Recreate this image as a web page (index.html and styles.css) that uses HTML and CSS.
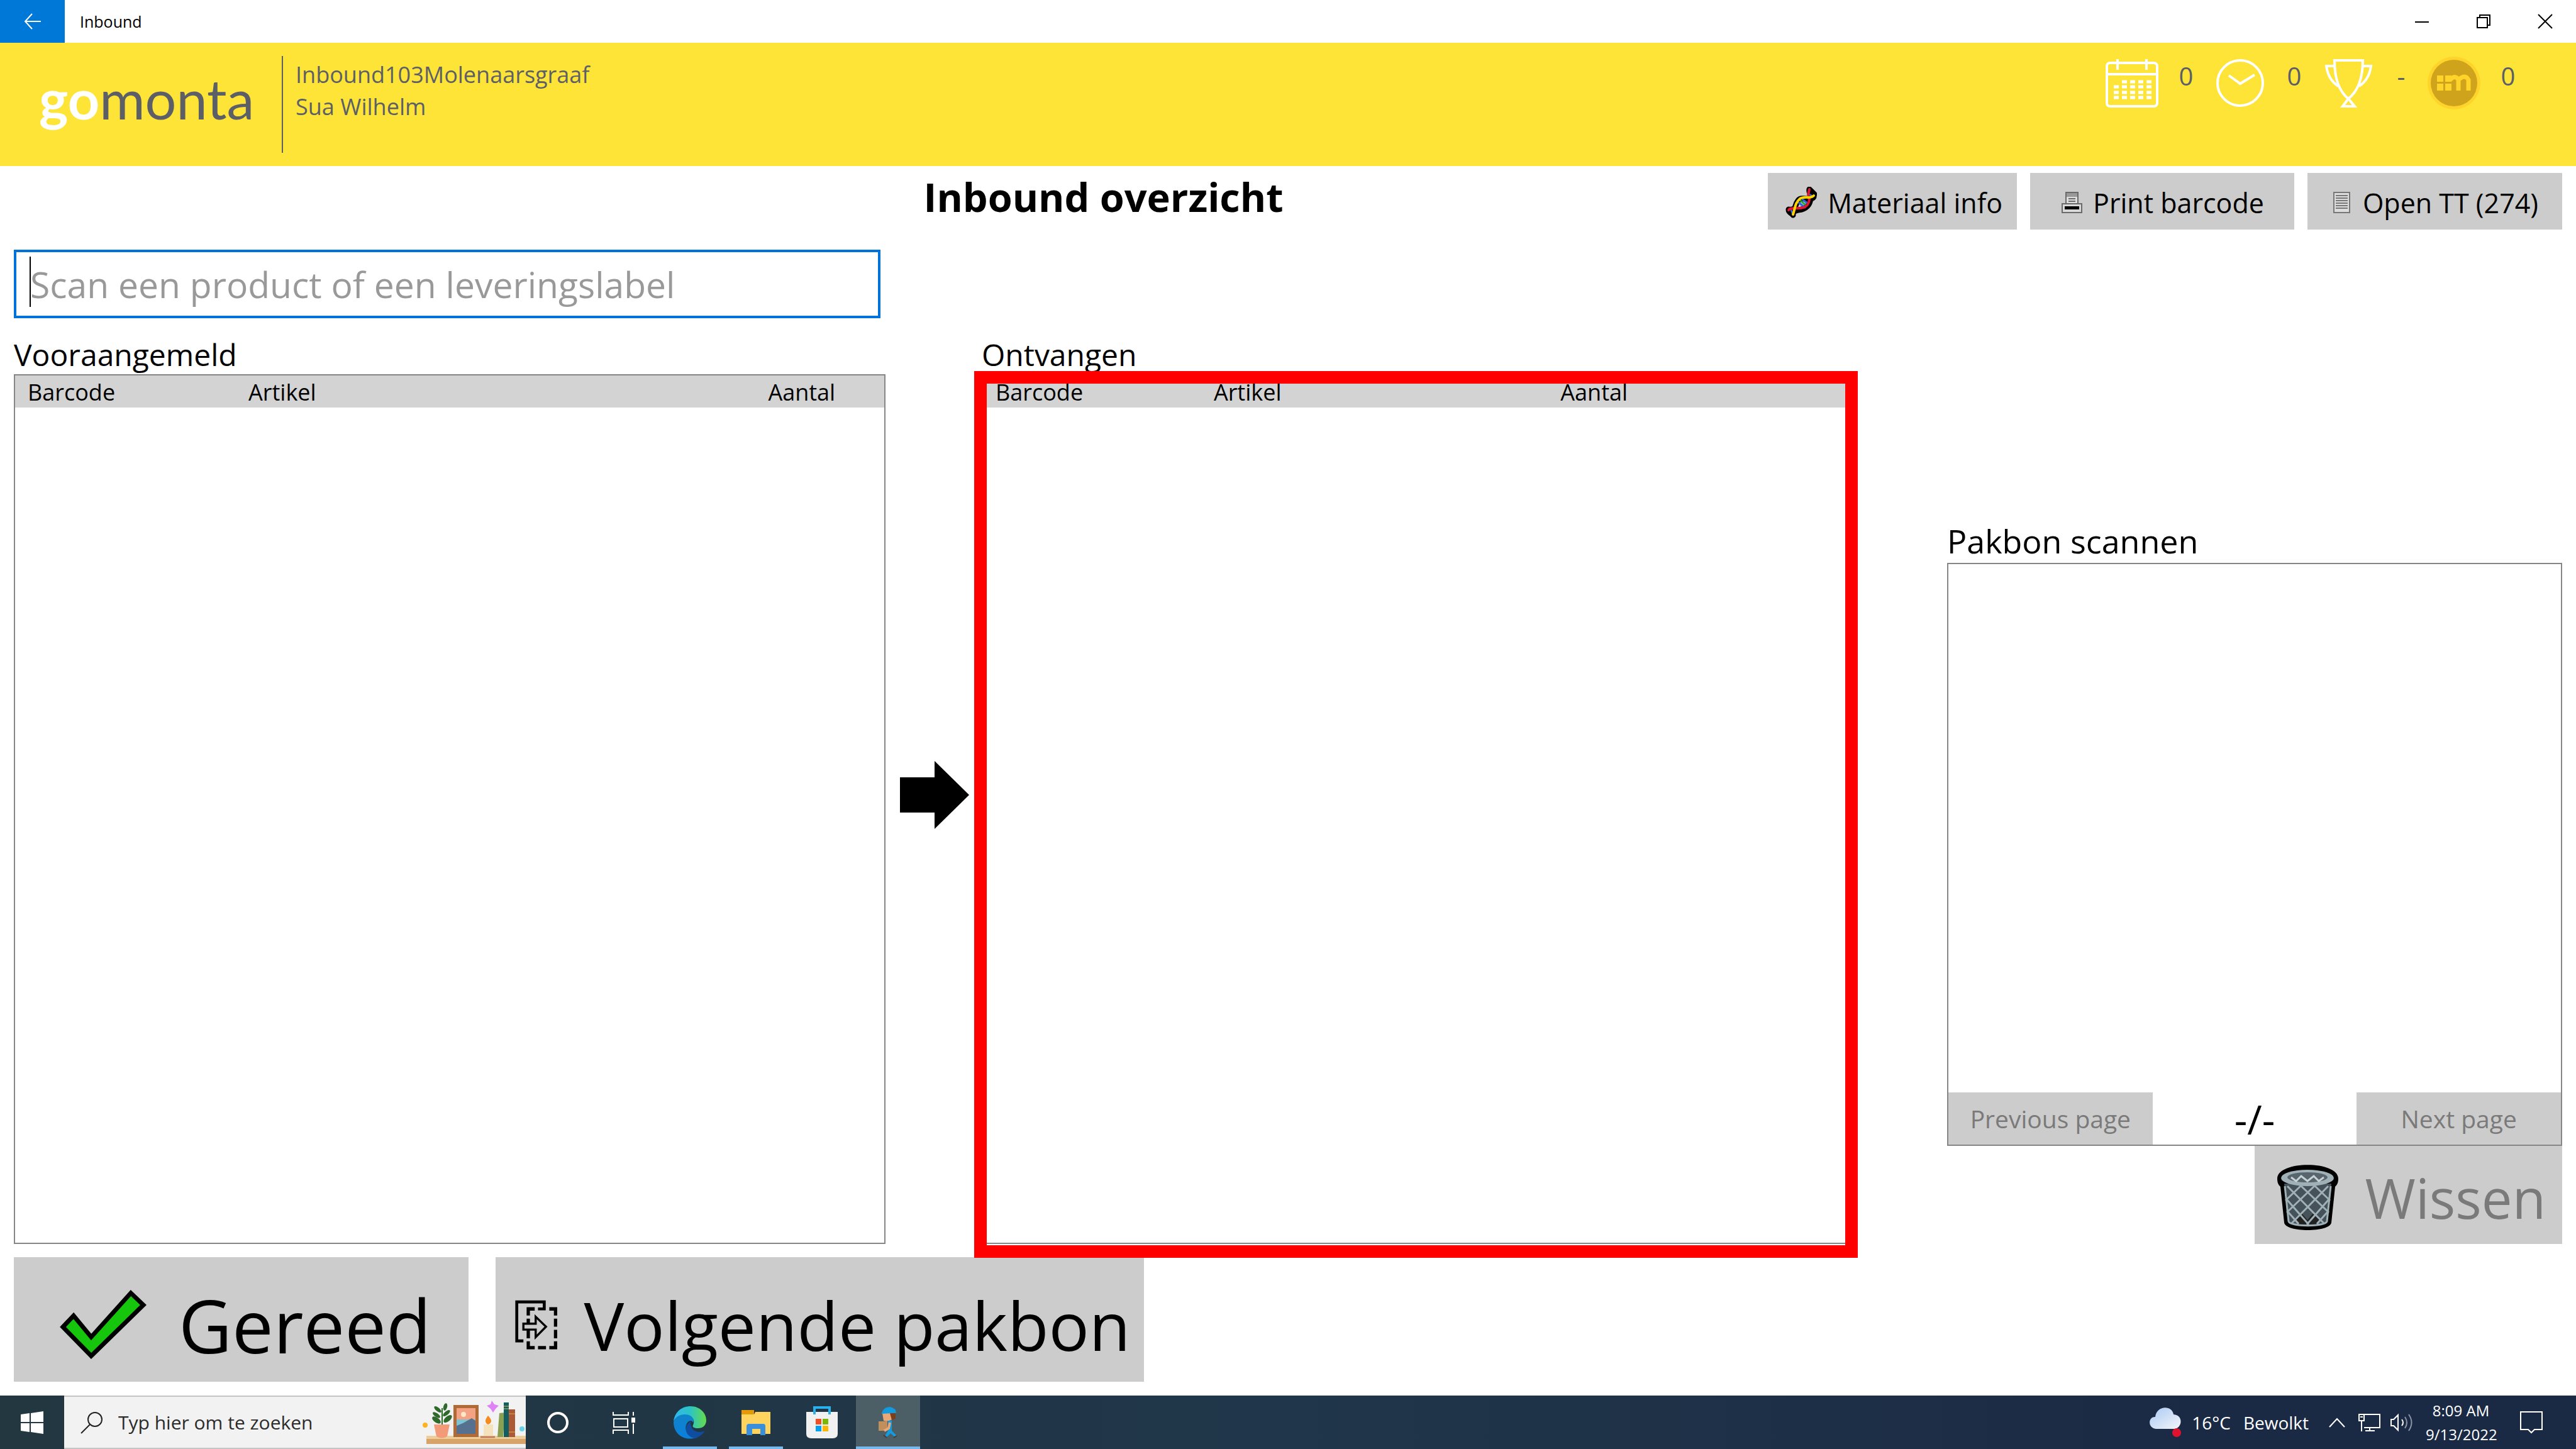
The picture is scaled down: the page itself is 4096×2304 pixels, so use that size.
FILE: index.html
```html
<!DOCTYPE html>
<html lang="nl">
<head>
<meta charset="utf-8">
<title>Inbound</title>
<link rel="stylesheet" href="styles.css">
</head>
<body>
<div class="titlebar">
  <button class="back" aria-label="Terug">
    <svg width="28" height="26" viewBox="0 0 28 26" fill="none" stroke="#fff" stroke-width="2"><path d="M27 13H2M13 1L2 13l11 12"/></svg>
  </button>
  <span class="title">Inbound</span>
  <div class="window-controls">
    <button aria-label="Minimaliseren"><svg width="24" height="24" viewBox="0 0 24 24" stroke="#000" stroke-width="2"><path d="M1 13H23"/></svg></button>
    <button aria-label="Verkleinen"><svg width="24" height="24" viewBox="0 0 24 24" fill="none" stroke="#000" stroke-width="2"><path d="M2 6H18V22H2zM6 6V2H22V18H18"/></svg></button>
    <button aria-label="Sluiten"><svg width="24" height="24" viewBox="0 0 24 24" stroke="#000" stroke-width="2"><path d="M1 1L23 23M23 1L1 23"/></svg></button>
  </div>
</div>

<header class="header">
  <div class="logo"><span class="logo-go">go</span>monta</div>
  <div class="account">
    <div>Inbound103Molenaarsgraaf</div>
    <div>Sua Wilhelm</div>
  </div>
  <div class="stats">
    <svg class="stat-icon" viewBox="0 0 84 86" fill="none" stroke="#fff" stroke-width="4">
      <rect x="2" y="11" width="80" height="69" rx="5"/><path d="M2 29H82M19 5V22M65 5V22"/>
      <path stroke-width="5" stroke-dasharray="8 5" d="M26 41H73M13 49H73M13 58H73M13 66H73"/>
    </svg>
    <span class="stat-value">0</span>
    <svg class="stat-icon" viewBox="0 0 84 86" fill="none" stroke="#fff" stroke-width="4"><circle cx="42" cy="43" r="36"/><path d="M24 31L42 44L65 30"/></svg>
    <span class="stat-value">0</span>
    <svg class="stat-icon" viewBox="0 0 84 86" fill="none" stroke="#fff" stroke-width="4">
      <path d="M20 7H65C65 36 57 56 42 68C27 56 20 36 20 7zM20 16H7C9 31 15 41 26 48M65 16H78C76 31 70 41 59 48M42 68L33 80H52z"/>
    </svg>
    <span class="stat-value stat-rank">-</span>
    <svg class="stat-icon" viewBox="0 0 84 86">
      <circle cx="42" cy="43" r="42" fill="#ffd42a"/><circle cx="42" cy="43" r="37" fill="#cfa31c"/>
      <path fill="#ffd42a" d="M15 31H25V41H15zM28 31H38V41H28zM15 44H25V55H15zM28 44H38V55H28z"/>
      <path fill="none" stroke="#ffd42a" stroke-width="7" d="M36 38Q44 29 49 38V55M49 38Q60 28 65 38V55"/>
    </svg>
    <span class="stat-value">0</span>
  </div>
</header>

<main class="main">
  <div class="toolbar">
    <h1>Inbound overzicht</h1>
    <div class="tools">
      <button class="btn tool tool-material">
        <svg width="50" height="50" viewBox="0 0 50 50" fill="none" stroke-linecap="round" stroke-linejoin="round">
          <path stroke="#000" stroke-width="9" d="M38 4C36 14 46 10 45 16C40 24 26 14 20 22C14 30 18 34 10 36C2 36 5 40 12 44M38 4L46 12M40 16C40 30 32 34 26 36C16 38 12 38 12 44M5 36L12 45"/>
          <path stroke="#2d63e0" stroke-width="3" d="M36 11L43 15M21 25L31 33M27 20L36 27M9 37L12 44"/>
          <path stroke="#21a337" stroke-width="3" d="M24 22L33 30"/>
          <path stroke="#e2162c" stroke-width="4" d="M38 4L36 13M38 18C38 30 30 34 22 34C12 34 6 34 5 37"/>
          <path stroke="#ffd500" stroke-width="4" d="M45 14C40 20 30 14 23 19C15 26 16 32 12 44"/>
        </svg>
        Materiaal info
      </button>
      <button class="btn tool tool-print">
        <svg width="33" height="34" viewBox="0 0 33 34" fill="none" stroke="#6a6a6a" stroke-width="2"><path d="M7 1H26V19H7z" fill="#ddd"/><path d="M8 2H25V8H8z" fill="#999" stroke="none"/><path d="M11 11H22M11 15H22"/><path d="M1 19H32V33H1z" fill="#d8d8d8"/><rect x="5" y="23" width="23" height="5" fill="#000" stroke="none"/></svg>
        Print barcode
      </button>
      <button class="btn tool tool-tt">
        <svg width="27" height="34" viewBox="0 0 27 34" fill="none" stroke="#777" stroke-width="2"><path d="M1 1H26V33H1z" fill="#ddd"/><path d="M4 6H23M4 10H23M4 14H23M4 18H23M4 22H23M4 26H23"/></svg>
        Open TT (274)
      </button>
    </div>
  </div>

  <div class="scan">
    <input id="scan" type="text" aria-label="Scan" placeholder="Scan een product of een leveringslabel">
    <span class="caret"></span>
  </div>

  <div class="columns">
    <section class="list">
      <h2>Vooraangemeld</h2>
      <div class="frame">
        <table class="table-announced">
          <thead><tr><th class="col-code">Barcode</th><th class="col-article">Artikel</th><th>Aantal</th></tr></thead>
        </table>
      </div>
    </section>

    <div class="arrow">
      <svg width="110" height="108" viewBox="0 0 110 108"><path d="M0 26H55V0L110 54L55 108V82H0z"/></svg>
    </div>

    <section class="list">
      <h2>Ontvangen</h2>
      <div class="frame">
        <table class="table-received">
          <thead><tr><th class="col-code">Barcode</th><th class="col-article">Artikel</th><th>Aantal</th></tr></thead>
        </table>
        <div class="highlight"></div>
      </div>
    </section>

    <section class="slip">
      <h2>Pakbon scannen</h2>
      <div class="preview">
        <div class="pager">
          <button class="btn" disabled>Previous page</button>
          <span>-/-</span>
          <button class="btn" disabled>Next page</button>
        </div>
      </div>
      <button class="btn clear" disabled>
        <svg width="97" height="104" viewBox="0 0 97 104" fill="none">
          <path fill="#000" d="M0 22C0-7 97-7 97 22C97 29 95 32 92 35L86 92C84 108 13 108 11 92L5 35C2 32 0 29 0 22z"/>
          <path fill="#46525a" d="M11 30H86L80 90C78 100 19 100 17 90z"/>
          <path fill="#222" d="M28 86L38 76L48 88L58 76L68 86L62 95H34z"/>
          <path stroke="#9fb0b6" stroke-width="3" d="M12 34L18 90C20 99 77 99 79 90L85 34M16 34L74 93M36 32L82 76M58 32L84 57M14 54L50 95M17 75L34 94M81 34L23 93M61 32L15 76M39 32L13 57M83 54L47 95M80 75L63 94"/>
          <ellipse cx="48" cy="21" rx="42" ry="13" fill="#9fb0b6"/><ellipse cx="48" cy="20" rx="32" ry="8" fill="#58656c"/>
          <path stroke="#c5d2d6" stroke-width="3" d="M22 20L30 26L38 18L48 26L58 18L66 26L74 20"/>
        </svg>
        Wissen
      </button>
    </section>
  </div>

  <div class="actions">
    <button class="btn done">
      <svg width="138" height="112" viewBox="0 0 138 112"><path fill="#16c60c" stroke="#000" stroke-width="7" d="M5 60L22 42L50 76L113 6L133 25L50 106z"/></svg>
      Gereed
    </button>
    <button class="btn next">
      <svg width="68" height="79" viewBox="58 64 218 255" fill="none" stroke="#000">
        <path stroke-width="15" d="M100 274H66V74H207V110H175"/>
        <path stroke-width="17" d="M158 110H125V144M233 110H265V144M265 160V201M265 217V261M265 276V309H233M216 309H175M158 309H125V276M125 261V160"/>
        <path fill="#ccc" stroke-width="11" d="M100 186H163V150L216 201L163 255V216H100z"/>
      </svg>
      Volgende pakbon
    </button>
  </div>
</main>

<footer class="taskbar">
  <button class="start" aria-label="Start"><svg width="36" height="36" viewBox="0 0 36 36" fill="#fff"><path d="M0 5L14 3V17H0zM16 3L36 0V17H16zM0 19H14V33L0 31zM16 19H36V36L16 33z"/></svg></button>
  <label class="search">
    <svg width="36" height="36" viewBox="0 0 36 36" fill="none" stroke="#222" stroke-width="2"><circle cx="23" cy="13" r="11"/><path d="M15 21L1 35"/></svg>
    <input type="text" placeholder="Typ hier om te zoeken">
    <svg width="164" height="70" viewBox="0 0 164 70">
      <rect x="6" y="56" width="158" height="6" fill="#efcd9b"/><rect x="6" y="61" width="158" height="8" fill="#d6a468"/>
      <circle cx="4" cy="39" r="4" fill="#ffb41f"/><circle cx="158" cy="45" r="4" fill="#66d3e8"/>
      <path d="M18 38H43L39 57Q30 62 22 57z" fill="#f39a78"/>
      <g fill="#2f6a2c"><ellipse cx="36" cy="10" rx="3" ry="6" transform="rotate(15 36 10)"/><ellipse cx="24" cy="14" rx="3" ry="7" transform="rotate(-50 24 14)"/><ellipse cx="38" cy="20" rx="3" ry="7" transform="rotate(50 38 20)"/><ellipse cx="22" cy="23" rx="3" ry="7" transform="rotate(-55 22 23)"/><ellipse cx="40" cy="29" rx="4" ry="8" transform="rotate(50 40 29)"/><ellipse cx="22" cy="31" rx="4" ry="8" transform="rotate(-55 22 31)"/></g>
      <path d="M31 38V12" stroke="#2f6a2c" stroke-width="2"/>
      <rect x="49" y="7" width="40" height="51" fill="#b06a36"/><rect x="54" y="12" width="30" height="41" fill="#f3a384"/><rect x="54" y="30" width="30" height="10" fill="#7cc4d4"/><path d="M54 53V40L64 36L78 28L84 32V53z" fill="#56718f"/><circle cx="65" cy="22" r="4" fill="#ffe8c8"/>
      <path d="M110 0L114 6L121 8L116 13L112 19L108 13L102 8L108 6z" fill="#df82f5"/>
      <rect x="97" y="38" width="15" height="20" fill="#f3e2bb"/><path d="M104 24Q114 34 104 38Q96 34 104 24z" fill="#f58a1f"/><path d="M92 58H115" stroke="#c47f5a" stroke-width="3"/>
      <path d="M122 20L131 19L128 58H119z" fill="#88a04f"/><rect x="129" y="3" width="8" height="55" fill="#135e60"/><path d="M129 9H137M129 13H137" stroke="#e5b94d" stroke-width="1"/><rect x="137" y="14" width="10" height="44" fill="#ac5936"/><path d="M137 21H147M137 50H147" stroke="#e5a94d" stroke-width="1"/>
    </svg>
  </label>
  <nav class="apps">
    <button aria-label="Cortana"><svg width="36" height="36" viewBox="0 0 36 36" fill="none" stroke="#fff" stroke-width="4"><circle cx="18" cy="18" r="15"/></svg></button>
    <button aria-label="Taakweergave"><svg width="36" height="36" viewBox="0 0 36 36" fill="none" stroke="#fff" stroke-width="2"><path d="M1 1V6H25V1M2 12H24V25H2zM1 36V30H25V36M33 1V7M33 20V36"/><rect x="31" y="11" width="5" height="6" fill="#fff"/></svg></button>
    <button class="open" aria-label="Microsoft Edge"><svg width="52" height="52" viewBox="0 0 52 52">
      <defs><linearGradient id="edge-top"><stop offset="0" stop-color="#31b9ee"/><stop offset=".5" stop-color="#2bc3c8"/><stop offset="1" stop-color="#65dc48"/></linearGradient><linearGradient id="edge-body" x2="0" y2="1"><stop offset="0" stop-color="#0f83c9"/><stop offset="1" stop-color="#0c7fdc"/></linearGradient></defs>
      <path fill="url(#edge-top)" d="M0 24C2 8 14 0 27 0C42 0 52 11 52 22C52 31 46 35 39 35C33 35 29 33 31 30C36 20 26 14 18 14C9 14 3 18 0 24z"/>
      <path fill="url(#edge-body)" d="M0 25C2 17 10 13 18 13C28 13 34 20 31 26C28 20 22 24 20 30C17 40 24 48 36 50C16 56 0 44 0 25z"/>
      <path fill="#0f4da0" d="M27 24C13 34 21 50 35 51C42 48 47 44 50 39C40 44 26 40 27 24z"/>
    </svg></button>
    <button class="open" aria-label="Verkenner"><svg width="46" height="40" viewBox="0 0 46 40"><path d="M0 0H20V7H0z" fill="#e39a06"/><path d="M0 7H20L22 3H46V38H0z" fill="#ffd45e"/><path d="M8 40V26Q8 22 12 22H35Q38 22 38 26V40H30V30H17V40z" fill="#3a8fdc"/></svg></button>
    <button aria-label="Microsoft Store"><svg width="50" height="52" viewBox="0 0 50 52"><path d="M0 9H50V44Q50 51 42 51H8Q0 51 0 44z" fill="#f1f1f1"/><path d="M13 13V2H37V13" fill="none" stroke="#29b1ee" stroke-width="4"/><path d="M15 20H24V29H15z" fill="#f04e23"/><path d="M26 20H35V29H26z" fill="#7cb704"/><path d="M15 31H24V40H15z" fill="#04a0ee"/><path d="M26 31H35V40H26z" fill="#ffb602"/></svg></button>
    <button class="open active" aria-label="Inbound"><svg width="30" height="50" viewBox="0 0 30 50"><path d="M6 10L8 22Q14 24 22 20L24 9z" fill="#e9a877"/><path d="M18 10H27V19L21 21z" fill="#7b3f1d"/><path d="M5 10Q8 0 18 0Q28 2 28 10H22L5 11z" fill="#129bdf"/><path d="M15 22H21V38L29 46L26 48L19 42L13 48L10 46L15 38z" fill="#129bdf"/><rect y="23" width="14" height="15" fill="#c08f5b"/><path d="M18 25L16 34L9 38" fill="none" stroke="#e9a877" stroke-width="4"/><path d="M8 45L13 49M24 49L29 46" stroke="#4a3a36" stroke-width="2"/></svg></button>
  </nav>
  <div class="tray">
    <svg class="weather" width="52" height="48" viewBox="0 0 52 48"><defs><linearGradient id="cloud" x2="1" y2="1"><stop offset="0" stop-color="#a9c9f5"/><stop offset="1" stop-color="#f4f6f8"/></linearGradient></defs><path fill="url(#cloud)" d="M10 34C-4 32-2 14 9 15C11-4 36-4 38 11C54 12 52 32 40 34z"/><circle cx="43" cy="40" r="7" fill="#e1122e"/></svg>
    <span class="temperature">16°C</span>
    <span class="condition">Bewolkt</span>
    <svg class="chevron" width="26" height="18" viewBox="0 0 26 18" fill="none" stroke="#fff" stroke-width="2"><path d="M1 16L13 3L25 16"/></svg>
    <svg class="network" width="35" height="30" viewBox="0 0 35 30" fill="none" stroke="#fff" stroke-width="2"><path d="M9 2H34V23H9M18 23V28M11 28H26M1 2H9V12H1zM5 12V29M3 6H7"/></svg>
    <svg class="volume" width="36" height="32" viewBox="0 0 36 32" fill="none" stroke="#fff" stroke-width="2"><path d="M1 11H5L12 4V28L5 21H1z"/><path d="M18 11Q22 16 18 21"/><path stroke="#8d95a3" d="M23 7Q29 16 23 25M29 3Q38 16 29 29"/></svg>
    <div class="clock"><div>8:09 AM</div><div>9/13/2022</div></div>
    <svg class="notice" width="36" height="36" viewBox="0 0 36 36" fill="none" stroke="#fff" stroke-width="2"><path d="M1 1H35V29H23L18 34L13 29H1z"/></svg>
  </div>
</footer>
</body>
</html>
```
FILE: styles.css
```css
* { box-sizing: border-box; }

body {
  margin: 0;
  min-height: 100vh;
  display: flex;
  flex-direction: column;
  background: #fff;
  color: #000;
  font-family: "Open Sans", "Noto Sans", sans-serif;
}

button, input { font: inherit; color: inherit; border: 0; margin: 0; padding: 0; background: none; border-radius: 0; }
h1, h2 { margin: 0; }
svg { display: block; flex: none; }

/* Title bar */
.titlebar { display: flex; align-items: center; height: 68px; font-size: 25px; }
.back { width: 103px; height: 68px; display: grid; place-items: center; background: #0078d7; }
.title { margin-left: 24px; }
.window-controls { display: flex; margin-left: auto; }
.window-controls button { width: 98px; height: 68px; display: grid; place-items: center; }

/* Header */
.header { display: flex; align-items: flex-start; height: 196px; padding: 21px 64px 0 62px; background: #ffe438; color: #5c5f66; }
.logo { width: 386px; font-family: Lato, sans-serif; font-weight: 400; font-size: 88px; line-height: 134px; }
.logo-go { color: #fff; font-weight: 700; }
.account { height: 154px; padding: 4px 0 0 20px; border-left: 2px solid #5c5f66; font-size: 36px; line-height: 51px; }
.stats { display: flex; margin-left: auto; }
.stat-icon { width: 84px; height: 86px; }
.stat-value { width: 88px; text-align: center; font-size: 40px; line-height: 64px; }
.stat-rank { width: 84px; }

/* Main area */
.main { flex: 1; display: flex; flex-direction: column; padding: 11px 22px 22px; }
.btn { display: flex; align-items: center; justify-content: center; background: #ccc; white-space: nowrap; }
.btn:disabled { color: #7a7a7a; }

.toolbar { display: flex; justify-content: space-between; align-items: flex-start; }
.toolbar h1 { margin-left: 35.7%; font-size: 63px; line-height: 76px; font-weight: 700; }
.tools { display: flex; gap: 21px; }
.tool { height: 90px; gap: 17px; padding-top: 4px; font-size: 43px; }
.tool-material { padding-left: 28px; padding-right: 23px; }
.tool-print { padding-left: 50px; padding-right: 48px; }
.tool-tt { gap: 20px; padding-left: 41px; padding-right: 38px; }

.scan { position: relative; width: 34%; margin-top: 32px; }
.scan input { display: block; width: 100%; height: 109px; border: 4px solid #0072d8; padding: 0 22px; font-size: 57px; }
input::placeholder { color: #999; opacity: 1; }
.caret { position: absolute; left: 25px; top: 11px; width: 2px; height: 80px; background: #000; }

.columns { flex: 1; display: grid; grid-template-columns: 1386fr 153fr 1386fr 149fr 978fr; margin-top: 27px; }
.columns h2 { font-size: 48px; line-height: 62px; font-weight: 400; }
.list { display: flex; flex-direction: column; }
.frame { position: relative; flex: 1; border: 2px solid #868686; }
table { width: 100%; border-collapse: collapse; table-layout: fixed; background: #d3d3d3; font-size: 36px; line-height: 49px; }
th { padding: 2px 0 0 20px; text-align: left; font-weight: 400; }
.table-announced .col-code { width: 25.4%; }
.table-announced .col-article { width: 59.8%; }
.table-received .col-code { width: 25.1%; }
.table-received .col-article { width: 39.9%; }
.highlight { position: absolute; inset: -7px -9px -24px -14px; border: 20px solid #f00; }
.arrow { display: grid; place-items: center; padding: 16px 0 0 3px; }

.slip { grid-column: 5; display: flex; flex-direction: column; padding-top: 292px; }
.columns .slip h2 { font-size: 52px; line-height: 70px; }
.preview { flex: 1; display: flex; flex-direction: column; justify-content: flex-end; border: 2px solid #868686; }
.pager { display: grid; grid-template: 83px / 1fr 1fr 1fr; text-align: center; }
.pager .btn { font-size: 39px; }
.pager span { font-size: 64px; line-height: 86px; }
.clear { align-self: flex-end; height: 156px; gap: 43px; padding: 8px 26px 0 36px; font-size: 87px; }

.actions { display: flex; gap: 43px; margin-top: 21px; }
.actions .btn { height: 198px; padding-top: 16px; }
.done { gap: 51px; padding-left: 73px; padding-right: 59px; font-size: 117px; }
.next { gap: 42px; padding-left: 31px; padding-right: 22px; font-size: 107px; }

/* Taskbar */
.taskbar { display: flex; height: 85px; background: linear-gradient(90deg, #223740 0%, #20364a 50%, #1b2a44 85%); color: #fff; }
.start { width: 102px; display: grid; place-items: center; }
.search { display: flex; align-items: center; width: 734px; padding-left: 26px; background: #f2f2f2; border: solid #c4c4c4; border-width: 2px 0; }
.search input { flex: 1; min-width: 0; padding-left: 24px; font-size: 30px; color: #222; }
.search input::placeholder { color: #2b2b2b; }
.apps { display: flex; gap: 3px; }
.apps button { width: 102px; display: grid; place-items: center; }
.apps .open { background: linear-gradient(#76b9ed, #76b9ed) bottom / 86px 4px no-repeat; }
.apps .active { background-color: #4d5f66; background-size: 100% 4px; }
.tray { display: flex; align-items: center; margin-left: auto; padding-right: 53px; font-size: 28px; }
.temperature { margin-left: 15px; }
.condition { margin-left: 20px; }
.chevron { margin-left: 32px; }
.network { margin-left: 21px; }
.volume { margin-left: 16px; }
.clock { width: 112px; margin-left: 20px; text-align: center; font-size: 24px; line-height: 38px; }
.notice { margin-left: 38px; }
```
